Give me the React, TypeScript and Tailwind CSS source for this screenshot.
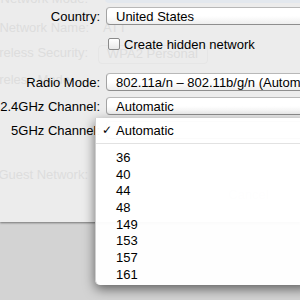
export default function App() {
  const nums = ["36", "40", "44", "48", "149", "153", "157", "161"];
  const popup =
    "h-[18px] -mr-[40px] rounded-[4px] border border-[#a3a3a3] border-t-[#b8b8b8] border-b-[#8e8e8e] bg-gradient-to-b from-[#ffffff] via-[#ffffff] to-[#eeeeee] pl-[9px] flex items-center leading-none";
  const label = "text-right self-center leading-none";
  return (
    <div className="relative w-[300px] h-[300px] overflow-hidden bg-[#d3d3d3] font-['Liberation_Sans',Arial,sans-serif] text-[13px] text-[#000000]">
      <div className="relative h-[222px] bg-[#ececec] shadow-[0_1px_2px_rgba(0,0,0,0.45)]">
        {/* fading previous view */}
        <div className="absolute inset-0 text-[#dddddd] leading-[16px]">
          <div className="absolute left-[105px] top-[-16px] right-[-20px] h-[19px] rounded-[4px] bg-[#e3e8ee]" />
          <span className="absolute right-[212px] top-[-9px] whitespace-nowrap">Network Mode:</span>
          <span className="absolute right-[211px] top-[20px] whitespace-nowrap">Network Name:</span>
          <span className="absolute left-[103px] top-[20px]">ATT</span>
          <span className="absolute right-[212px] top-[45px] whitespace-nowrap">Wireless Security:</span>
          <div className="absolute left-[98px] top-[45px] w-[110px] h-[19px] rounded-[4px] border border-[#e6e6e6]" />
          <span className="absolute left-[107px] top-[46px] whitespace-nowrap">WPA2 Personal</span>
          <span className="absolute left-[-16px] top-[72px] whitespace-nowrap">Wireless Mode</span>
          <span className="absolute right-[212px] top-[167px] whitespace-nowrap">Guest Network:</span>
          <div className="absolute left-[215px] top-[185px] w-[67px] h-[19px] rounded-[4px] border border-[#eaeaea] flex items-center justify-center text-[#e6e6e6]">
            Cancel
          </div>
          <div className="absolute left-[293px] top-[185px] w-[40px] h-[19px] rounded-[4px] border border-[#eaeaea]" />
        </div>

        <div className="relative pt-[7px] grid grid-cols-[100px_1fr] gap-x-[6px]">
          <div className={label}>Country:</div>
          <div className={popup}>United States</div>

          <div className="h-[16px] mt-[11px]" />
          <div className="h-[16px] mt-[11px] flex items-center pl-[2px]">
            <div className="w-[12px] h-[12px] rounded-[2px] border border-[#8a8a8a] bg-gradient-to-b from-[#ffffff] to-[#e8e8e8]" />
            <span className="ml-[4px] leading-none">Create hidden network</span>
          </div>

          <div className={`${label} mt-[21px]`}>Radio Mode:</div>
          <div className={`${popup} mt-[21px] whitespace-nowrap`}>802.11a/n – 802.11b/g/n (Automatic)</div>

          <div className={`${label} mt-[6px]`}>2.4GHz Channel:</div>
          <div className={`${popup} mt-[6px]`}>Automatic</div>

          <div className={`${label} mt-[6px] whitespace-nowrap`}>5GHz Channel:</div>
          <div className={`${popup} mt-[6px]`}>Automatic</div>
        </div>
      </div>

      {/* open pop-up menu */}
      <div className="absolute left-[95px] top-[118px] right-[-10px] h-[167px] rounded-bl-[5px] bg-[rgba(255,255,255,0.96)] border-l border-[#cfcfcf] shadow-[0_4px_12px_rgba(0,0,0,0.55)] pt-[4px] text-[#000000]">
        <div className="h-[16.67px] flex items-center">
          <span className="w-[20px] pl-[6px] font-['DejaVu_Sans',sans-serif] text-[12px] leading-none">✓</span>
          <span className="leading-none">Automatic</span>
        </div>
        <div className="h-[10.67px] flex items-center">
          <div className="h-px w-full bg-[#e2e2e2]" />
        </div>
        {nums.map((n) => (
          <div key={n} className="h-[16.67px] flex items-center pl-[20px]">
            <span className="leading-none">{n}</span>
          </div>
        ))}
      </div>
    </div>
  );
}
